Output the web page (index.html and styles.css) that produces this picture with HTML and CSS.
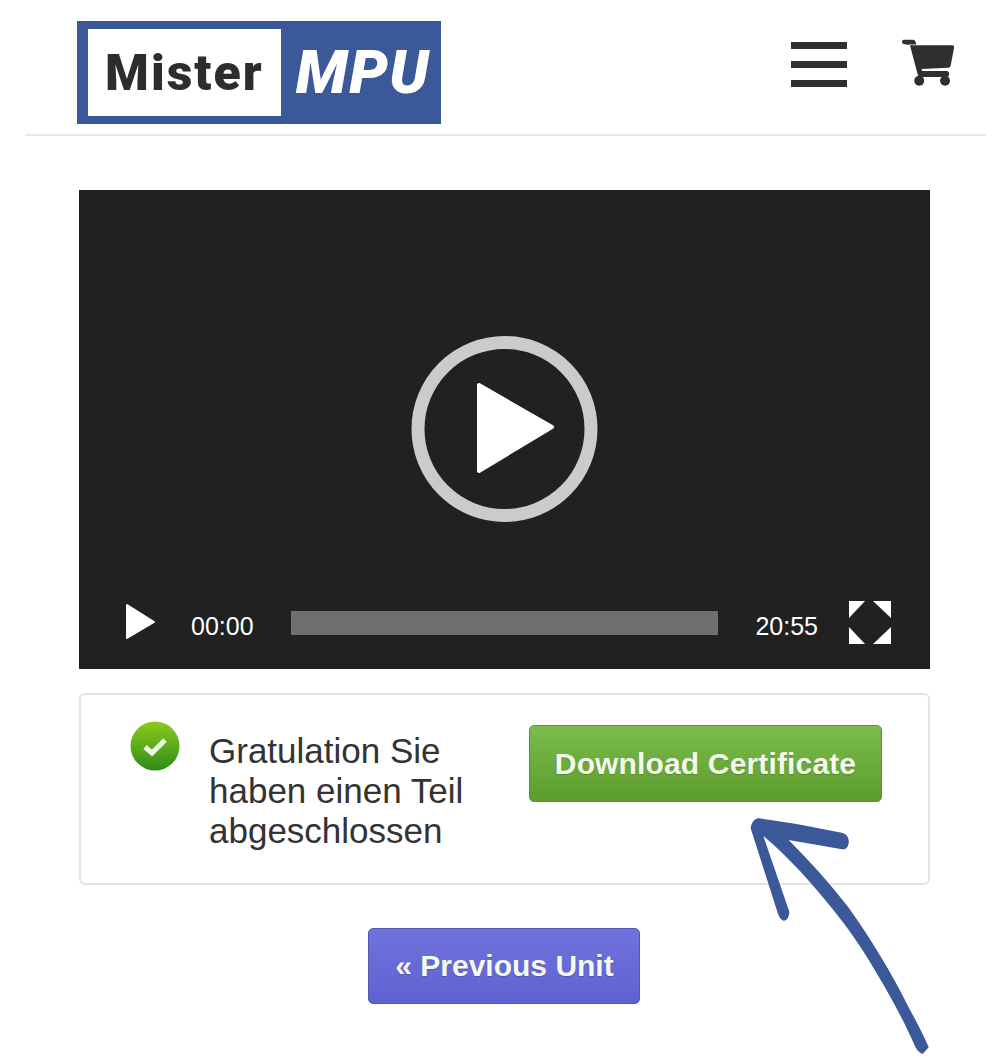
FILE: index.html
```html
<!DOCTYPE html>
<html lang="de">
<head>
<meta charset="utf-8">
<title>Mister MPU</title>
<link rel="stylesheet" href="styles.css">
</head>
<body>
<header class="site-header">
  <a class="logo">
    <span class="logo-mister">Mister</span>
    <span class="logo-mpu">MPU</span>
  </a>
  <div class="header-icons">
    <div class="burger"><span></span><span></span><span></span></div>
    <svg class="cart" viewBox="425 58 157 140" aria-label="Warenkorb">
      <path fill="#2f2f2f" d="M432 59H458C464 59 467 64 468 74H452C445 75 427 75 425 67C424 62 427 59 432 59Z"/>
      <path fill="#2f2f2f" d="M449 76H576C581 76 583 79 582 84L572 137C571 141 568 144 564 144L484 148L486 154H560C570 154 570 172 560 172H482C476 172 473 168 472 163Z"/>
      <circle fill="#2f2f2f" cx="477" cy="183" r="15"/>
      <circle fill="#2f2f2f" cx="555" cy="183" r="15"/>
    </svg>
  </div>
</header>

<main class="content">
  <section class="video">
    <svg class="big-play" viewBox="0 0 187 186">
      <circle cx="93.5" cy="93" r="86.5" fill="none" stroke="#cbcbcb" stroke-width="13"/>
      <path fill="#fff" stroke="#fff" stroke-width="4" stroke-linejoin="round" d="M68 49V135L141 91Z"/>
    </svg>
    <div class="controls">
      <svg class="small-play" viewBox="0 0 31 37">
        <path fill="#fff" stroke="#fff" stroke-width="2" stroke-linejoin="round" d="M2 2V35L29 19Z"/>
      </svg>
      <span class="time time-start">00:00</span>
      <div class="track"></div>
      <span class="time time-end">20:55</span>
      <svg class="fullscreen" viewBox="0 0 42 43">
        <path fill="#fff" d="M0 0H16L0 17Z"/>
        <path fill="#fff" d="M24 0H42V17Z"/>
        <path fill="#fff" d="M0 26L16 43H0Z"/>
        <path fill="#fff" d="M42 26V43H24Z"/>
      </svg>
    </div>
  </section>

  <section class="notice">
    <svg class="check" viewBox="0 0 50 50">
      <defs>
        <linearGradient id="checkFill" x1="0" y1="0" x2="0" y2="1">
          <stop offset="0" stop-color="#8ccb1c"/>
          <stop offset="1" stop-color="#2f8a1a"/>
        </linearGradient>
      </defs>
      <circle cx="25" cy="25" r="24.5" fill="url(#checkFill)"/>
      <path d="M15 26L22 32L35 19" fill="none" stroke="#eef6e4" stroke-width="5"/>
    </svg>
    <p class="notice-text">Gratulation Sie haben einen Teil abgeschlossen</p>
    <a class="btn btn-green">Download Certificate</a>
  </section>

  <nav class="pager">
    <a class="btn btn-purple">« Previous Unit</a>
  </nav>
</main>

<svg class="arrow" viewBox="0 0 660 780">
  <path fill="#3b5998" d="M62 85C64 68 74 54 88 55L200 72L335 98C350 102 358 112 356 130C354 144 346 150 336 148L176 120C240 185 300 250 355 322C425 420 485 520 535 620C557 660 578 700 596 742L578 762C566 758 558 748 552 732C525 670 488 600 440 520C400 450 360 392 310 330C250 255 175 170 100 108L178 335C178 350 170 362 162 362C152 360 147 350 143 338Z"/>
</svg>
</body>
</html>
```

FILE: styles.css
```css
* {
  box-sizing: border-box;
}

html, body {
  margin: 0;
  padding: 0;
}

body {
  position: relative;
  width: 1000px;
  height: 1060px;
  overflow: hidden;
  background: #fff;
  color: #333;
  font-family: "Liberation Sans", Arial, sans-serif;
}

.site-header {
  display: flex;
  justify-content: space-between;
  align-items: flex-start;
  width: 961px;
  height: 136px;
  margin-left: 25px;
  padding: 21px 32px 0 52px;
  border-bottom: 2px solid #e8e8e8;
}

.logo {
  display: flex;
  align-items: center;
  width: 364px;
  height: 103px;
  padding: 8px 11px;
  background: #3b5998;
}

.logo-mister {
  display: flex;
  align-items: center;
  justify-content: center;
  width: 193px;
  height: 87px;
  background: #fff;
  color: #2d2d2d;
  font-family: Roboto, sans-serif;
  font-weight: 900;
  font-size: 50px;
  letter-spacing: 2px;
}

.logo-mpu {
  margin-left: 15px;
  color: #fff;
  font-family: Roboto, sans-serif;
  font-weight: 900;
  font-style: italic;
  font-size: 61px;
  letter-spacing: 1.5px;
  line-height: 1;
}

.header-icons {
  display: flex;
  align-items: flex-start;
  gap: 55px;
  padding-top: 18px;
}

.burger {
  display: flex;
  flex-direction: column;
  gap: 12px;
  width: 56px;
  margin-top: 3px;
}

.burger span {
  display: block;
  height: 7px;
  background: #2f2f2f;
}

.cart {
  display: block;
  width: 52px;
  height: 47px;
}

.content {
  display: flex;
  flex-direction: column;
  width: 851px;
  margin: 54px 0 0 79px;
}

.video {
  position: relative;
  display: flex;
  align-items: flex-end;
  height: 479px;
  background: #212121;
}

.big-play {
  position: absolute;
  top: 146px;
  left: 332px;
  width: 187px;
  height: 186px;
}

.controls {
  display: flex;
  align-items: center;
  width: 100%;
  height: 86px;
  padding: 0 39px 0 46px;
  color: #fff;
}

.small-play {
  flex: none;
  width: 31px;
  height: 37px;
  margin-top: -9px;
}

.time {
  flex: none;
  font-size: 25px;
  line-height: 28px;
}

.time-start {
  margin-left: 35px;
}

.track {
  flex: 1;
  height: 24px;
  margin: -6px 37px 0 37.5px;
  background: #6f6f6f;
}

.fullscreen {
  flex: none;
  width: 42px;
  height: 43px;
  margin: -8px 0 0 31px;
}

.notice {
  display: flex;
  align-items: flex-start;
  height: 192px;
  margin-top: 24px;
  padding: 26px 46px 0 49px;
  background: #fff;
  border: 2px solid #e3e3e3;
  border-radius: 6px;
}

.check {
  flex: none;
  width: 50px;
  height: 50px;
  filter: blur(0.5px);
}

.notice-text {
  width: 290px;
  margin: 10px 0 0 29px;
  font-size: 35px;
  line-height: 40px;
}

.btn {
  display: flex;
  align-items: center;
  justify-content: center;
  border-radius: 5px;
  color: #f4f9ec;
  font-weight: 700;
  font-size: 30px;
  text-shadow: 0 1px 1px rgba(0, 0, 0, 0.2);
}

.btn-green {
  flex: none;
  width: 353px;
  height: 77px;
  margin: 4px 0 0 30px;
  background: linear-gradient(#7cbc4c, #5c9c2c);
  border: 1px solid #5a9433;
  letter-spacing: 0.15px;
}

.pager {
  display: flex;
  justify-content: center;
  margin-top: 43px;
}

.btn-purple {
  width: 272px;
  height: 76px;
  margin-left: -2px;
  padding-left: 2px;
  background: linear-gradient(#7072dc, #5f62d2);
  border: 1px solid #5557b0;
}

.arrow {
  position: absolute;
  left: 730px;
  top: 800px;
  width: 220px;
  height: 260px;
}
```
